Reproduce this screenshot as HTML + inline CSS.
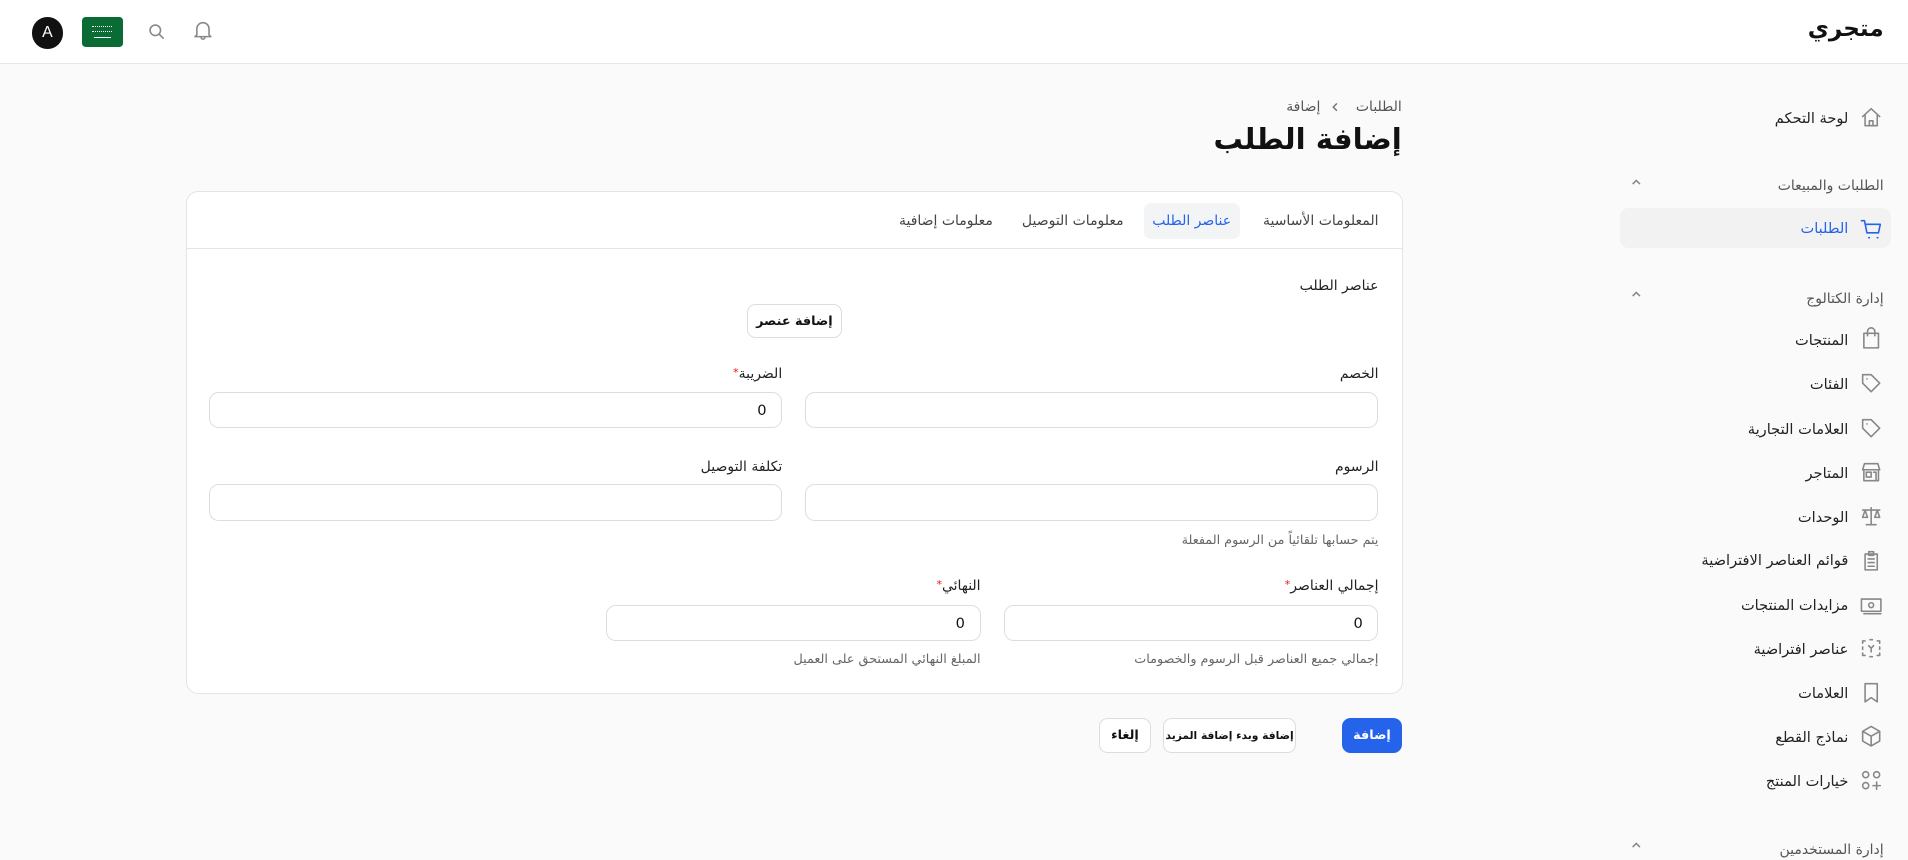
<!DOCTYPE html>
<html dir="rtl" lang="ar"><head><meta charset="utf-8">
<style>
html,body{margin:0;padding:0;width:1908px;height:860px;overflow:hidden;background:#fafafa;}
#w{zoom:1.21684;width:1568px;height:707px;position:relative;font-family:"DejaVu Sans","Liberation Sans",sans-serif;color:#111;}
.a{position:absolute;white-space:nowrap;}
.hdr{position:absolute;left:0;top:0;width:1568px;height:52px;background:#fff;border-bottom:1px solid #e7e7e7;}
.ico{position:absolute;width:20px;height:20px;fill:none;stroke:#888;stroke-width:1.3;stroke-linecap:round;stroke-linejoin:round;}
.si{right:49px;font-size:12px;color:#222;margin-top:2px;}
.sec{right:20px;font-size:11.5px;color:#555;margin-top:2px;}
.chev{position:absolute;left:1339px;width:12px;height:12px;fill:none;stroke:#888;stroke-width:1.3;}
.card{position:absolute;left:153px;top:157px;width:998px;height:412px;background:#fff;border:1px solid #e4e4e4;border-radius:10px;}
.inp{position:absolute;background:#fff;border:1px solid #ddd;border-radius:8px;height:30px;box-sizing:border-box;font-size:12px;padding-right:12px;line-height:29px;}
.lb{font-size:11.5px;color:#222;margin-top:1px;}
.hint{font-size:10.5px;color:#666;margin-top:1px;}
.req{color:#e11;font-size:9px;vertical-align:top;}
.btn{position:absolute;height:29px;box-sizing:border-box;border:1px solid #ddd;border-radius:7px;background:#fff;font-size:10.5px;font-weight:bold;text-align:center;line-height:28px;white-space:nowrap;overflow:hidden;}
</style></head><body><div id="w">
<div class="hdr"></div>
<div class="a" style="right:20px;top:13px;font-size:19px;font-weight:bold;">متجري</div>
<div class="a" style="left:26px;top:14px;width:26px;height:26px;border-radius:50%;background:#111;color:#fff;font-family:'Liberation Sans';font-size:13px;text-align:center;line-height:26px;">A</div>
<div class="a" style="left:67px;top:14px;width:34px;height:25px;border-radius:3px;background:#0a6b35;"><div style="position:absolute;left:9px;top:7px;width:16px;height:4px;border-top:1px dotted #fff;border-bottom:1px dotted #fff"></div><div style="position:absolute;left:10px;top:16px;width:14px;height:1px;background:#fff"></div></div>
<svg class="ico" style="left:122px;top:19px;width:14px;height:14px" viewBox="0 0 14 14"><circle cx="6" cy="6" r="4.3"/><path d="M9.2 9.2L12.5 12.5"/></svg>
<svg class="ico" style="left:158px;top:16px;width:18px;height:18px" viewBox="0 0 18 18"><path d="M4 13V8a5 5 0 0110 0v5l1.5 1.5h-13L4 13zM7.5 15.5a1.6 1.6 0 003 0"/></svg>

<svg class="ico" style="left:1528px;top:86px" viewBox="0 0 20 20"><path d="M3 9.5L10 3l7 6.5M5 8v9h10V8M8.5 17v-4h3v4"/></svg>
<div class="a si" style="top:88px">لوحة التحكم</div>
<div class="a sec" style="top:144px">الطلبات والمبيعات</div>
<svg class="chev" style="top:144px" viewBox="0 0 12 12"><path d="M3 7.5L6 4.5l3 3"/></svg>
<div class="a" style="left:1331px;top:171px;width:223px;height:33px;background:#f2f2f3;border-radius:7px;"></div>
<svg class="ico" style="left:1528px;top:178px;stroke:#2563eb" viewBox="0 0 20 20"><path d="M2 3h2.5l2 10h9.5l1.5-7H5.2M8 17h.5M15 17h.5"/></svg>
<div class="a si" style="top:179px;color:#2563eb">الطلبات</div>
<div class="a sec" style="top:237px">إدارة الكتالوج</div>
<svg class="chev" style="top:236px" viewBox="0 0 12 12"><path d="M3 7.5L6 4.5l3 3"/></svg>
<svg class="ico" style="left:1528px;top:268px" viewBox="0 0 20 20"><path d="M4 6h12v12H4zM7 8V4.5a3 3 0 016 0V8"/></svg>
<div class="a si" style="top:271px">المنتجات</div>
<svg class="ico" style="left:1528px;top:305px" viewBox="0 0 20 20"><path d="M3 3h7l7 7-7 7-7-7zM6.5 6.5h.1"/></svg>
<div class="a si" style="top:307px">الفئات</div>
<svg class="ico" style="left:1528px;top:342px" viewBox="0 0 20 20"><path d="M3 3h7l7 7-7 7-7-7zM6.5 6.5h.1"/></svg>
<div class="a si" style="top:344px">العلامات التجارية</div>
<svg class="ico" style="left:1528px;top:378px" viewBox="0 0 20 20"><path d="M3 8l1.5-5h11L17 8zM4 8v9h12V8M6 10h4v4H6zM12 10h2v7"/></svg>
<div class="a si" style="top:380px">المتاجر</div>
<svg class="ico" style="left:1528px;top:414px" viewBox="0 0 20 20"><path d="M10 3v14M6 17h8M3 5h14M5 5l-2 6h4zM15 5l-2 6h4z"/></svg>
<div class="a si" style="top:416px">الوحدات</div>
<svg class="ico" style="left:1528px;top:450px" viewBox="0 0 20 20"><path d="M5 5h10v13H5zM8 3h4v3H8zM7.5 9h5M7.5 12h5M7.5 15h5"/></svg>
<div class="a si" style="top:452px">قوائم العناصر الافتراضية</div>
<svg class="ico" style="left:1528px;top:487px" viewBox="0 0 20 20"><path d="M2 5h16v10H2zM4 17h14"/><circle cx="10" cy="10" r="2"/></svg>
<div class="a si" style="top:489px">مزايدات المنتجات</div>
<svg class="ico" style="left:1528px;top:523px" viewBox="0 0 20 20"><path d="M3 6V4h2M15 4h2v2M17 14v2h-2M5 16H3v-2M9 3h2M9 17h2M3 9v2M17 9v2M8 8l2 2 2-2M10 10v3"/></svg>
<div class="a si" style="top:525px">عناصر افتراضية</div>
<svg class="ico" style="left:1528px;top:559px" viewBox="0 0 20 20"><path d="M5 3h10v15l-5-3.5L5 18z"/></svg>
<div class="a si" style="top:561px">العلامات</div>
<svg class="ico" style="left:1528px;top:595px" viewBox="0 0 20 20"><path d="M10 2l7 4v8l-7 4-7-4V6zM3 6l7 4 7-4M10 10v8"/></svg>
<div class="a si" style="top:597px">نماذج القطع</div>
<svg class="ico" style="left:1528px;top:631px" viewBox="0 0 20 20"><rect x="3" y="3" width="5" height="5" rx="2.5"/><rect x="12" y="3" width="5" height="5" rx="2.5"/><rect x="3" y="12" width="5" height="5" rx="2.5"/><path d="M14.5 11.5v6M11.5 14.5h6"/></svg>
<div class="a si" style="top:633px">خيارات المنتج</div>
<div class="a sec" style="top:690px">إدارة المستخدمين</div>
<svg class="chev" style="top:689px" viewBox="0 0 12 12"><path d="M3 7.5L6 4.5l3 3"/></svg>

<div class="a" style="right:416px;top:81px;font-size:11.5px;color:#555">الطلبات</div>
<svg class="a" style="left:1092px;top:83px;width:10px;height:10px;fill:none;stroke:#777;stroke-width:1.2" viewBox="0 0 10 10"><path d="M6.5 2L3.5 5l3 3"/></svg>
<div class="a" style="left:1057px;top:81px;font-size:11.5px;color:#555">إضافة</div>
<div class="a" style="right:416px;top:100px;font-size:24px;font-weight:bold;">إضافة الطلب</div>

<div class="card">
  <div style="position:absolute;left:0;right:0;top:46px;border-top:1px solid #e4e4e4"></div>
  <div class="a" style="right:19px;top:17px;font-size:11.5px;color:#444">المعلومات الأساسية</div>
  <div class="a" style="left:786px;top:9px;width:79px;height:30px;background:#f3f4f6;border-radius:6px;color:#2563eb;font-size:11.5px;text-align:center;line-height:30px">عناصر الطلب</div>
  <div class="a" style="left:686px;top:17px;font-size:11.5px;color:#444">معلومات التوصيل</div>
  <div class="a" style="left:585px;top:17px;font-size:11.5px;color:#444">معلومات إضافية</div>

  <div class="a lb" style="right:19px;top:70px">عناصر الطلب</div>
  <div class="btn" style="left:460px;top:92px;width:78px;height:28px">إضافة عنصر</div>

  <div class="a lb" style="right:19px;top:142px">الخصم</div>
  <div class="a lb" style="right:509px;top:142px">الضريبة<span class="req">*</span></div>
  <div class="inp" style="left:508px;top:164px;width:471px"></div>
  <div class="inp" style="left:18px;top:164px;width:471px">0</div>

  <div class="a lb" style="right:19px;top:218px">الرسوم</div>
  <div class="a lb" style="right:509px;top:218px">تكلفة التوصيل</div>
  <div class="inp" style="left:508px;top:240px;width:471px"></div>
  <div class="inp" style="left:18px;top:240px;width:471px"></div>
  <div class="a hint" style="right:19px;top:279px">يتم حسابها تلقائياً من الرسوم المفعلة</div>

  <div class="a lb" style="right:19px;top:316px">إجمالي العناصر<span class="req">*</span></div>
  <div class="a lb" style="right:346px;top:316px">النهائي<span class="req">*</span></div>
  <div class="inp" style="left:671px;top:339px;width:308px">0</div>
  <div class="inp" style="left:344px;top:339px;width:308px">0</div>
  <div class="a hint" style="right:19px;top:377px">إجمالي جميع العناصر قبل الرسوم والخصومات</div>
  <div class="a hint" style="right:346px;top:377px">المبلغ النهائي المستحق على العميل</div>
</div>

<div class="btn" style="left:1103px;top:590px;width:49px;background:#2563eb;border-color:#2563eb;color:#fff">إضافة</div>
<div class="btn" style="left:956px;top:590px;width:109px;font-size:8.8px;letter-spacing:-0.2px">إضافة وبدء إضافة المزيد</div>
<div class="btn" style="left:903px;top:590px;width:43px">إلغاء</div>
</div></body></html>
